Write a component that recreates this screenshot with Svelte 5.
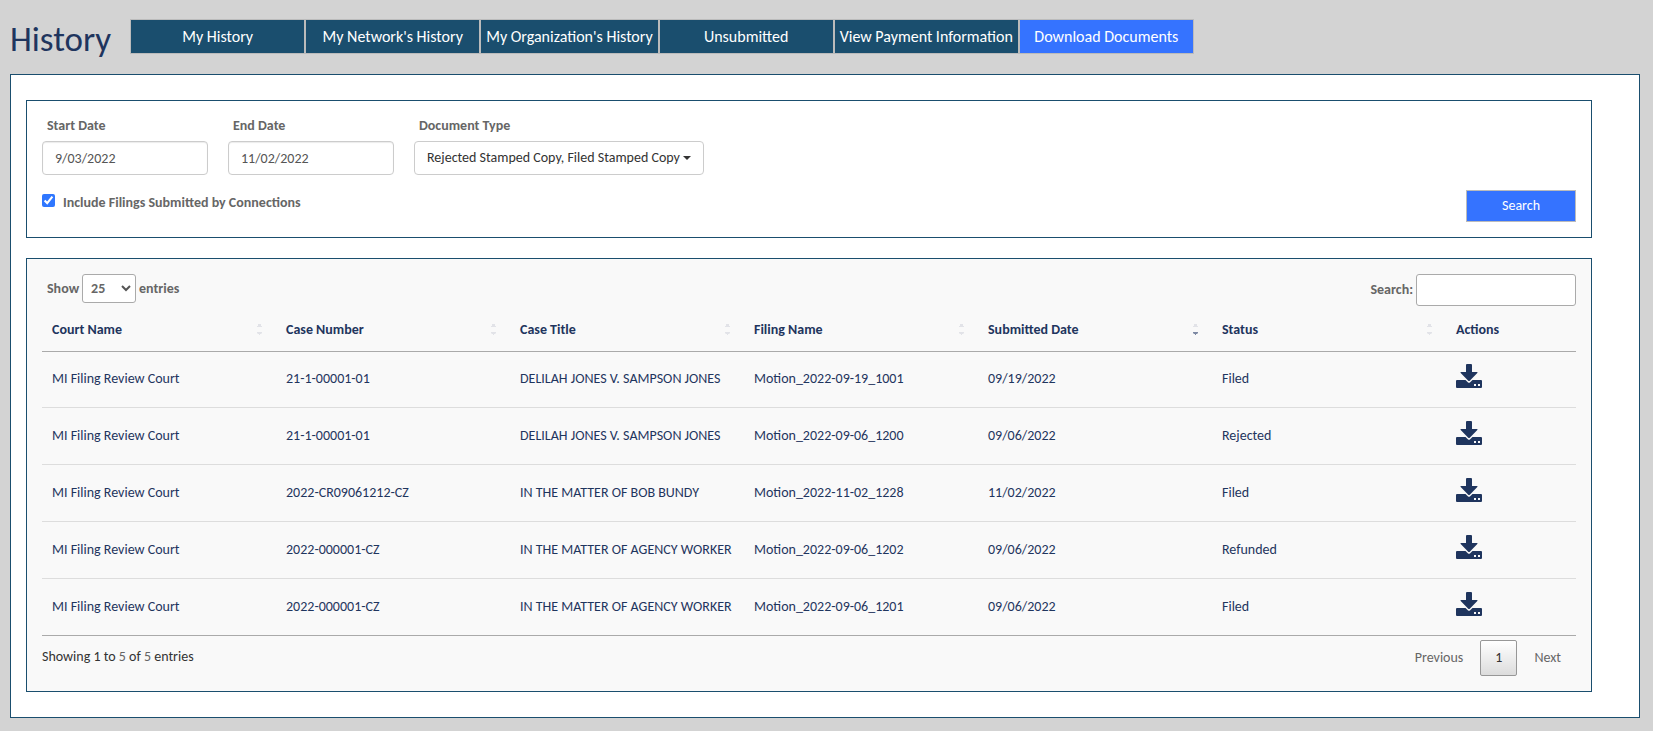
<script lang="ts">
	type Filing = {
		court: string;
		caseNumber: string;
		caseTitle: string;
		filingName: string;
		submitted: string;
		status: string;
	};

	const tabs = [
		'My History',
		"My Network's History",
		"My Organization's History",
		'Unsubmitted',
		'View Payment Information',
		'Download Documents'
	];

	const columns = [
		'Court Name',
		'Case Number',
		'Case Title',
		'Filing Name',
		'Submitted Date',
		'Status'
	];

	const filings: Filing[] = [
		{
			court: 'MI Filing Review Court',
			caseNumber: '21-1-00001-01',
			caseTitle: 'DELILAH JONES V. SAMPSON JONES',
			filingName: 'Motion_2022-09-19_1001',
			submitted: '09/19/2022',
			status: 'Filed'
		},
		{
			court: 'MI Filing Review Court',
			caseNumber: '21-1-00001-01',
			caseTitle: 'DELILAH JONES V. SAMPSON JONES',
			filingName: 'Motion_2022-09-06_1200',
			submitted: '09/06/2022',
			status: 'Rejected'
		},
		{
			court: 'MI Filing Review Court',
			caseNumber: '2022-CR09061212-CZ',
			caseTitle: 'IN THE MATTER OF BOB BUNDY',
			filingName: 'Motion_2022-11-02_1228',
			submitted: '11/02/2022',
			status: 'Filed'
		},
		{
			court: 'MI Filing Review Court',
			caseNumber: '2022-000001-CZ',
			caseTitle: 'IN THE MATTER OF AGENCY WORKER',
			filingName: 'Motion_2022-09-06_1202',
			submitted: '09/06/2022',
			status: 'Refunded'
		},
		{
			court: 'MI Filing Review Court',
			caseNumber: '2022-000001-CZ',
			caseTitle: 'IN THE MATTER OF AGENCY WORKER',
			filingName: 'Motion_2022-09-06_1201',
			submitted: '09/06/2022',
			status: 'Filed'
		}
	];

	let activeTab = $state('Download Documents');
	let sortedBy = $state('Submitted Date');
	let startDate = $state('9/03/2022');
	let endDate = $state('11/02/2022');
	let includeConnections = $state(true);
	let pageSize = $state('25');
	let query = $state('');

	let rows = $derived(
		filings.filter((f) => Object.values(f).join(' ').toLowerCase().includes(query.toLowerCase()))
	);
</script>

<header class="page-header">
	<h1>History</h1>
	<nav class="tabs">
		{#each tabs as tab}
			<button class="tab" class:active={tab === activeTab} onclick={() => (activeTab = tab)}>
				{tab}
			</button>
		{/each}
	</nav>
</header>

<main class="content">
	<form class="panel filters" onsubmit={(e) => e.preventDefault()}>
		<div class="fields">
			<div class="field">
				<label for="start-date">Start Date</label>
				<input id="start-date" class="date" type="text" bind:value={startDate} />
			</div>
			<div class="field">
				<label for="end-date">End Date</label>
				<input id="end-date" class="date" type="text" bind:value={endDate} />
			</div>
			<div class="field">
				<label for="doc-type">Document Type</label>
				<button id="doc-type" class="multiselect" type="button">
					Rejected Stamped Copy, Filed Stamped Copy
					<span class="caret"></span>
				</button>
			</div>
		</div>
		<div class="filter-actions">
			<label class="check">
				<input type="checkbox" bind:checked={includeConnections} />
				Include Filings Submitted by Connections
			</label>
			<button class="search-btn" type="submit">Search</button>
		</div>
	</form>

	<section class="panel results">
		<div class="table-tools">
			<div class="length">
				<label for="page-size">Show</label>
				<span class="select-wrap">
					<select id="page-size" bind:value={pageSize}>
						<option>10</option>
						<option>25</option>
						<option>50</option>
						<option>100</option>
					</select>
					<svg class="chevron" viewBox="0 0 10 7" aria-hidden="true">
						<path d="M1 1l4 4 4-4" />
					</svg>
				</span>
				<span>entries</span>
			</div>
			<div class="table-search">
				<label for="table-query">Search:</label>
				<input id="table-query" type="text" bind:value={query} />
			</div>
		</div>

		<table>
			<thead>
				<tr>
					{#each columns as column}
						<th scope="col" onclick={() => (sortedBy = column)}>
							<div class="heading">
								{column}
								<svg class="sort" class:desc={column === sortedBy} viewBox="0 0 5 11" aria-hidden="true">
									<path d="M0 3h5v-1h-1v-2h-3v2h-1z" />
									<path class="down" d="M0 8h5v1l-1 1h-1v1h-1v-1h-1l-1-1z" />
								</svg>
							</div>
						</th>
					{/each}
					<th scope="col" class="actions">Actions</th>
				</tr>
			</thead>
			<tbody>
				{#each rows as filing}
					<tr>
						<td>{filing.court}</td>
						<td>{filing.caseNumber}</td>
						<td>{filing.caseTitle}</td>
						<td>{filing.filingName}</td>
						<td>{filing.submitted}</td>
						<td>{filing.status}</td>
						<td>
							<button class="download" title="Download" aria-label="Download {filing.filingName}">
								<svg viewBox="0 0 26 24" aria-hidden="true">
									<path d="M10 1q0-1 1-1h4q1 0 1 1v7h5q1 0 .3 1l-7.3 7.5q-1 1-2 0l-7.3-7.5q-.7-1 .3-1h5z" />
									<path
										fill-rule="evenodd"
										d="M1 16h8.500l2.300 2.300q1.200 1 2.400 0l2.300-2.300h8.500q1 0 1 1v6q0 1-1 1h-24q-1 0-1-1v-6q0-1 1-1zM18 20v2h2v-2zM22 20v2h2v-2z"
									/>
								</svg>
							</button>
						</td>
					</tr>
				{/each}
			</tbody>
		</table>

		<div class="table-footer">
			<div class="info">
				Showing 1 to <span class="count">{rows.length}</span> of
				<span class="count">{filings.length}</span> entries
			</div>
			<nav class="pagination">
				<button class="page">Previous</button>
				<button class="page current">1</button>
				<button class="page">Next</button>
			</nav>
		</div>
	</section>
</main>

<style>
	:global(body) {
		background: #d3d3d3;
		color: #333;
		font-family: Carlito, Calibri, Lato, sans-serif;
		font-size: 14px;
		line-height: 20px;
	}

	:global(*) {
		box-sizing: border-box;
	}

	button,
	input,
	select {
		font: inherit;
		margin: 0;
	}

	button {
		cursor: pointer;
	}

	label,
	.length {
		color: #666;
		font-weight: bold;
	}

	.page-header {
		display: flex;
		align-items: flex-start;
		gap: 19px;
		padding: 19px 10px 0;
	}

	h1 {
		margin: 0;
		color: #1f355e;
		font-size: 35px;
		font-weight: normal;
		line-height: 40px;
	}

	.tabs {
		display: flex;
	}

	.tab {
		min-width: 175px;
		height: 35px;
		padding: 0 5px;
		background: #1a4e6e;
		border: 1px solid #bbb;
		color: #fff;
		font-size: 16px;
		font-weight: 500;
		white-space: nowrap;
	}

	.tab.active {
		background: #3573ff;
	}

	.content {
		margin: 15px 13px 13px 10px;
		padding: 25px 15px;
		background: #fff;
		border: 1px solid #1a4e6e;
	}

	.panel {
		width: 98%;
		padding: 15px;
		border: 1px solid #1a4e6e;
	}

	.filters {
		margin-bottom: 20px;
	}

	.fields {
		display: flex;
		gap: 20px;
	}

	.field label {
		display: block;
		margin-bottom: 5px;
		padding-left: 5px;
	}

	.date {
		width: 166px;
		height: 34px;
		padding: 6px 12px;
		border: 1px solid #ccc;
		border-radius: 4px;
		box-shadow: inset 0 1px 1px rgba(0, 0, 0, 0.08);
		color: #555;
	}

	.multiselect {
		display: flex;
		align-items: center;
		gap: 3px;
		height: 34px;
		padding: 0 12px;
		background: #fff;
		border: 1px solid #ccc;
		border-radius: 4px;
		color: #333;
	}

	.caret {
		border-top: 4px solid #333;
		border-right: 4px solid transparent;
		border-left: 4px solid transparent;
	}

	.filter-actions {
		display: flex;
		justify-content: space-between;
		align-items: flex-start;
		padding-top: 15px;
	}

	.check {
		display: flex;
		gap: 8px;
		padding-top: 3px;
	}

	.check input {
		width: 13px;
		height: 13px;
		margin-top: 1px;
		accent-color: #2f77ff;
	}

	.search-btn {
		width: 110px;
		height: 32px;
		background: #3573ff;
		border: 1px solid #bbb;
		color: #fff;
		font-weight: 500;
	}

	.results {
		background: #f9f9f9;
	}

	.table-tools {
		display: flex;
		justify-content: space-between;
		align-items: flex-start;
	}

	.length,
	.table-search {
		display: flex;
		align-items: center;
		gap: 3px;
	}

	.length {
		padding-left: 5px;
	}

	.select-wrap {
		position: relative;
	}

	select {
		display: block;
		width: 54px;
		height: 29px;
		padding: 0 8px;
		appearance: none;
		background: #fff;
		border: 1px solid #aaa;
		border-radius: 3px;
		color: #666;
	}

	.chevron {
		position: absolute;
		top: 11px;
		right: 5px;
		width: 10px;
		height: 7px;
		fill: none;
		stroke: #555;
		stroke-width: 2;
		pointer-events: none;
	}

	.table-search input {
		width: 160px;
		height: 32px;
		padding: 5px;
		background: #fff;
		border: 1px solid #aaa;
		border-radius: 3px;
	}

	table {
		width: 100%;
		border-collapse: separate;
		border-spacing: 0;
		border-bottom: 1px solid #aaa;
		color: #1f355e;
		table-layout: fixed;
	}

	th {
		height: 46px;
		padding: 2px 10px 0;
		border-bottom: 1px solid #aaa;
		text-align: left;
		cursor: pointer;
	}

	th.actions {
		width: 130px;
		cursor: default;
	}

	.heading {
		display: flex;
		justify-content: space-between;
		align-items: center;
	}

	.sort {
		width: 5px;
		height: 11px;
		margin-right: 4px;
		fill: #e2e3e8;
	}

	.sort.desc .down {
		fill: #7d89a3;
	}

	td {
		height: 57px;
		padding: 0 10px 1px;
		border-top: 1px solid #ddd;
		white-space: nowrap;
	}

	tbody tr:first-child td {
		height: 55px;
		border-top: none;
	}

	.download {
		display: block;
		margin-bottom: 6px;
		padding: 0;
		background: none;
		border: none;
	}

	.download svg {
		display: block;
		width: 26px;
		height: 24px;
		fill: #1f355e;
	}

	.table-footer {
		display: flex;
		justify-content: space-between;
		align-items: flex-start;
		padding-top: 4px;
	}

	.info {
		padding-top: 7px;
	}

	.count {
		color: #666;
	}

	.pagination {
		display: flex;
		gap: 2px;
	}

	.page {
		height: 36px;
		padding: 0 14px;
		background: none;
		border: 1px solid transparent;
		border-radius: 2px;
		color: #666;
	}

	.page.current {
		background: linear-gradient(#fff, #dcdcdc);
		border-color: #979797;
		color: #333;
	}
</style>
